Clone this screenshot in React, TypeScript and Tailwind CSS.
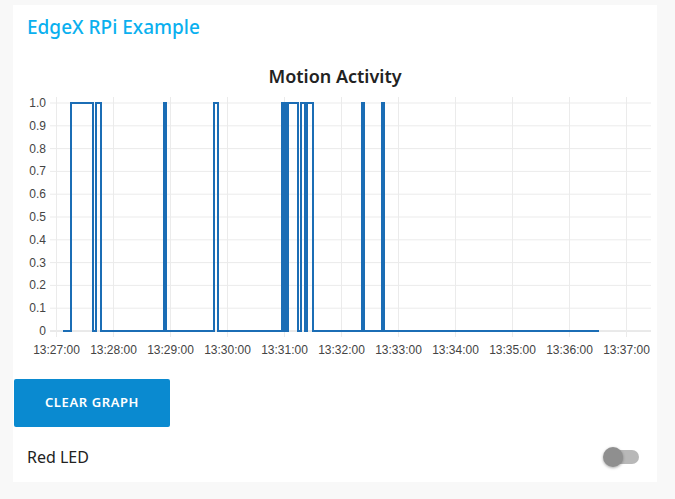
const yTicks = ["1.0", "0.9", "0.8", "0.7", "0.6", "0.5", "0.4", "0.3", "0.2", "0.1", "0"];
const xTicks = [
  "13:27:00",
  "13:28:00",
  "13:29:00",
  "13:30:00",
  "13:31:00",
  "13:32:00",
  "13:33:00",
  "13:34:00",
  "13:35:00",
  "13:36:00",
  "13:37:00",
];

// motion samples as [x, y] step edges (page coords)
const motion =
  "M63,331 H71 V103 H93 V331 H96 V103 H101 V331 H164 V103 H166 V331 H214 V103 H218 V331 " +
  "H282 V103 H284 V331 H285 V103 H287 V331 H288 V103 H298 V331 H301 V103 H305 V331 " +
  "H307 V103 H313 V331 H362 V103 H364 V331 H382 V103 H384 V331 H599";

function MotionChart() {
  const top = 103;
  const bottom = 331;
  const step = (bottom - top) / 10;
  return (
    <svg viewBox="13 60 644 300" width={644} height={300} className="block">
      <text
        x={335}
        y={83}
        textAnchor="middle"
        fontFamily="'Noto Sans', sans-serif"
        fontWeight={600}
        fontSize={18}
        fill="#222"
      >
        Motion Activity
      </text>
      {yTicks.map((t, i) => {
        const y = top + i * step;
        return (
          <g key={t}>
            <line x1={50} x2={651} y1={y} y2={y} stroke={i === 10 ? "#d4d4d4" : "#ebebeb"} strokeWidth={1} />
            <text
              x={46}
              y={y + 4}
              textAnchor="end"
              fontFamily="'Liberation Sans', Arial, sans-serif"
              fontSize={12}
              fill="#444"
            >
              {t}
            </text>
          </g>
        );
      })}
      {xTicks.map((t, i) => {
        const x = 56.5 + i * 57;
        return (
          <g key={t}>
            <line x1={x} x2={x} y1={97} y2={337} stroke="#ebebeb" strokeWidth={1} />
            <text
              x={x}
              y={354}
              textAnchor="middle"
              fontFamily="'Liberation Sans', Arial, sans-serif"
              fontSize={12}
              fill="#444"
            >
              {t}
            </text>
          </g>
        );
      })}
      <path d={motion} fill="none" stroke="#1b6db5" strokeWidth={2} />
    </svg>
  );
}

function App() {
  return (
    <div className="min-h-[499px] bg-[#f8f8f8] pt-[5px] pl-[13px] font-['Noto_Sans',sans-serif]">
      <div className="w-[644px] bg-white flex flex-col pb-[15px]">
        <div className="h-[55px] pl-[14px] pt-[10px]">
          <h1 className="text-[19px] leading-[24px] font-medium text-[#0ab0ef]">EdgeX RPi Example</h1>
        </div>
        <MotionChart />
        <button className="mt-[19px] ml-[1px] w-[156px] h-[48px] bg-[#0a8ad0] rounded-[2px] text-white text-[13px] font-semibold tracking-[0.6px]">
          CLEAR GRAPH
        </button>
        <div className="mt-[20px] h-[20px] flex items-center justify-between pl-[14px] pr-[18px]">
          <span className="text-[16px] text-[#222]">Red LED</span>
          <div className="relative w-[35px] h-[14px] rounded-full bg-[#b8b8b8]">
            <div className="absolute -left-[1px] -top-[3px] w-[20px] h-[20px] rounded-full bg-[#8f8f8f] shadow-[0_1px_3px_rgba(0,0,0,0.35)]" />
          </div>
        </div>
      </div>
    </div>
  );
}

export default App;
